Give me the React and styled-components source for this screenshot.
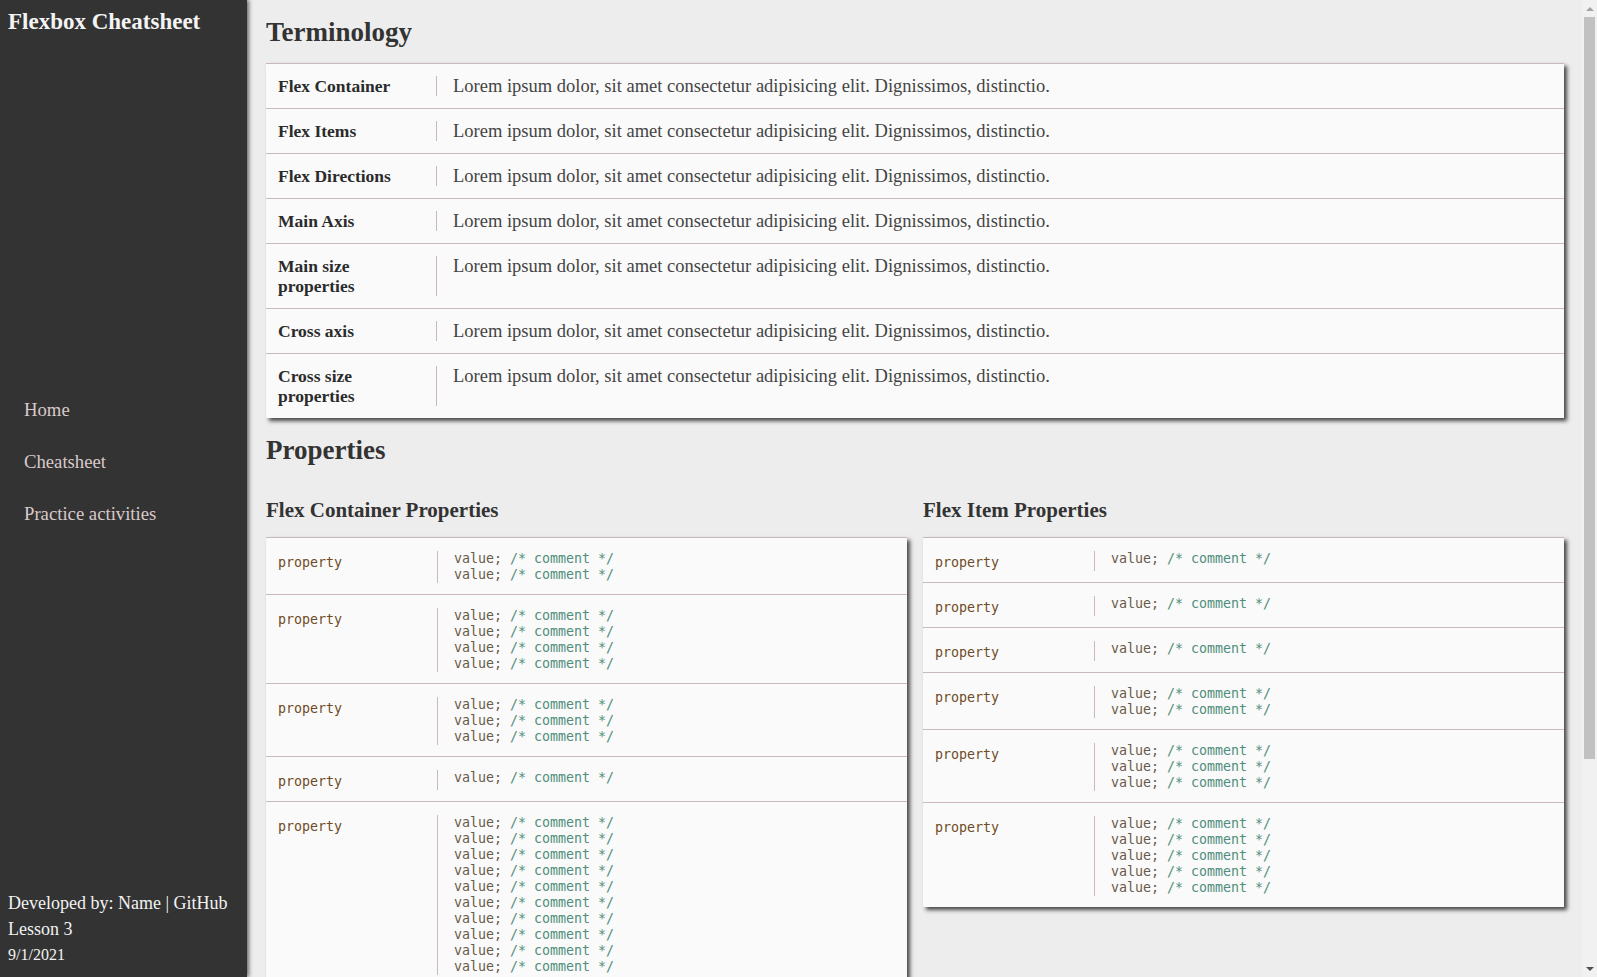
import React from "react";
import styled, { createGlobalStyle } from "styled-components";

const GlobalStyle = createGlobalStyle`
  html, body {
    margin: 0;
    padding: 0;
    height: 100%;
    overflow: hidden;
  }
  body {
    background: #ededed;
    font-family: "Liberation Serif", "Times New Roman", serif;
    color: #333;
  }
  * { box-sizing: border-box; }
`;

const Layout = styled.div`
  display: grid;
  grid-template-columns: 247px 1fr 15px;
  height: 100vh;
`;

const Sidebar = styled.aside`
  height: 100vh;
  background: #333;
  box-shadow: 2px 0 4px rgba(0, 0, 0, 0.55);
  display: flex;
  flex-direction: column;
  justify-content: space-between;
  padding: 8px 8px 13px 8px;
  z-index: 1;
`;

const Brand = styled.h1`
  margin: 0;
  font-size: 23px;
  line-height: 28px;
  font-weight: bold;
  color: #f4f4f4;
`;

const Nav = styled.nav`
  display: flex;
  flex-direction: column;
  gap: 31px;
  padding-left: 16px;
  margin-top: 363px;
`;

const NavLink = styled.a`
  color: #d9c9c9;
  font-size: 18.7px;
  line-height: 21px;
  text-decoration: none;
`;

const Footer = styled.footer`
  display: flex;
  flex-direction: column;
  gap: 5px;
  color: #f2f2f2;
`;

const FooterLine = styled.div`
  font-size: ${(p) => (p.$small ? "16px" : "18px")};
  line-height: ${(p) => (p.$small ? "19px" : "21px")};
`;

const Main = styled.main`
  height: 100vh;
  overflow-y: auto;
  padding: 16px 18px 80px 19px;
  min-width: 0;
  scrollbar-width: none;
`;

const ScrollTrack = styled.div`
  height: 100vh;
  background: #f1f1f1;
  display: flex;
  flex-direction: column;
  align-items: center;
`;

const ScrollButton = styled.div`
  width: 15px;
  height: 17px;
  flex: none;
  display: flex;
  align-items: center;
  justify-content: center;
  margin-top: ${(p) => (p.$down ? "auto" : "0")};

  &::before {
    content: "";
    width: 0;
    height: 0;
    border-left: 4px solid transparent;
    border-right: 4px solid transparent;
    ${(p) =>
      p.$down
        ? "border-top: 4px solid #505050;"
        : "border-bottom: 4px solid #a3a3a3;"}
  }
`;

const ScrollThumb = styled.div`
  width: 11px;
  height: 742px;
  background: #c1c1c1;
  flex: none;
`;

const SectionTitle = styled.h2`
  margin: 0 0 ${(p) => p.$mb || "14px"} 0;
  font-size: 27px;
  line-height: 32px;
  font-weight: bold;
  color: #333;
`;

const SubTitle = styled.h3`
  margin: 0 0 14px 0;
  font-size: 21px;
  line-height: 26px;
  font-weight: bold;
  color: #333;
`;

const Card = styled.div`
  background: #fafafa;
  border-top: 1px solid #cbb9b9;
  box-shadow: 3px 3px 4px rgba(0, 0, 0, 0.7);
  margin-bottom: ${(p) => p.$mb || "0"};
`;

const TermRow = styled.div`
  display: grid;
  grid-template-columns: 171px 1fr;
  padding: 12px 0;
  border-bottom: 1px solid #cbb9b9;
  &:last-child {
    border-bottom: none;
  }
`;

const Term = styled.div`
  padding: 0 12px;
  font-weight: bold;
  font-size: 17.5px;
  line-height: 20px;
  color: #2b2b2b;
  border-right: 1px solid #cbb9b9;
`;

const Desc = styled.div`
  padding-left: 16px;
  font-size: 18.5px;
  line-height: 20px;
  color: #444;
`;

const PropGrid = styled.div`
  display: grid;
  grid-template-columns: 1fr 1fr;
  column-gap: 16px;
  align-items: start;
  margin-top: 31px;
`;

const PropColumn = styled.section`
  min-width: 0;
`;

const PropRow = styled.div`
  display: grid;
  grid-template-columns: 171px 1fr;
  padding: 13px 0 11px;
  border-bottom: 1px solid #cbb9b9;
  &:last-child {
    border-bottom: none;
  }
`;

const PropName = styled.code`
  display: block;
  padding: 3px 12px 0;
  font-family: "DejaVu Sans Mono", "Liberation Mono", monospace;
  font-size: 13.3px;
  line-height: 17px;
  color: #6e4b26;
`;

const Values = styled.pre`
  margin: 0;
  padding-left: 16px;
  border-left: 1px solid #cbb9b9;
  font-family: "DejaVu Sans Mono", "Liberation Mono", monospace;
  font-size: 13.3px;
  line-height: 16px;
  color: #6a5a49;
`;

const Comment = styled.span`
  color: #4f8e7a;
`;

const terms = [
  "Flex Container",
  "Flex Items",
  "Flex Directions",
  "Main Axis",
  "Main size properties",
  "Cross axis",
  "Cross size properties",
];

const lorem =
  "Lorem ipsum dolor, sit amet consectetur adipisicing elit. Dignissimos, distinctio.";

const containerProps = [2, 4, 3, 1, 10, 3, 2, 1];
const itemProps = [1, 1, 1, 2, 3, 5];

function PropertyRow({ lines }) {
  return (
    <PropRow>
      <PropName>property</PropName>
      <Values>
        {Array.from({ length: lines }).map((_, i) => (
          <React.Fragment key={i}>
            value; <Comment>/* comment */</Comment>
            {i < lines - 1 ? "\n" : ""}
          </React.Fragment>
        ))}
      </Values>
    </PropRow>
  );
}

export default function App() {
  return (
    <>
      <GlobalStyle />
      <Layout>
        <Sidebar>
          <div>
            <Brand>Flexbox Cheatsheet</Brand>
            <Nav>
              <NavLink href="#">Home</NavLink>
              <NavLink href="#">Cheatsheet</NavLink>
              <NavLink href="#">Practice activities</NavLink>
            </Nav>
          </div>
          <Footer>
            <FooterLine>Developed by: Name | GitHub</FooterLine>
            <FooterLine>Lesson 3</FooterLine>
            <FooterLine $small>9/1/2021</FooterLine>
          </Footer>
        </Sidebar>
        <Main>
          <SectionTitle $mb="15px">Terminology</SectionTitle>
          <Card $mb="16px">
            {terms.map((t) => (
              <TermRow key={t}>
                <Term>{t}</Term>
                <Desc>{lorem}</Desc>
              </TermRow>
            ))}
          </Card>
          <SectionTitle>Properties</SectionTitle>
          <PropGrid>
            <PropColumn>
              <SubTitle>Flex Container Properties</SubTitle>
              <Card>
                {containerProps.map((n, i) => (
                  <PropertyRow key={i} lines={n} />
                ))}
              </Card>
            </PropColumn>
            <PropColumn>
              <SubTitle>Flex Item Properties</SubTitle>
              <Card>
                {itemProps.map((n, i) => (
                  <PropertyRow key={i} lines={n} />
                ))}
              </Card>
            </PropColumn>
          </PropGrid>
        </Main>
        <ScrollTrack aria-hidden="true">
          <ScrollButton />
          <ScrollThumb />
          <ScrollButton $down />
        </ScrollTrack>
      </Layout>
    </>
  );
}
